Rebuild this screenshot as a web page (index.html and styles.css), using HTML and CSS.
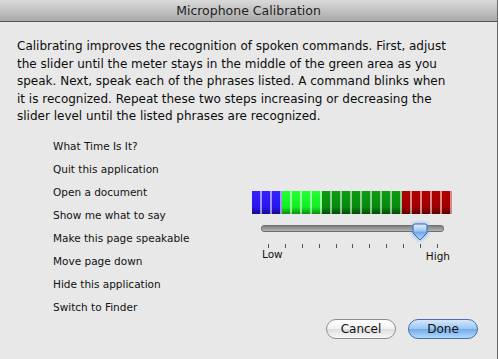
FILE: index.html
```html
<!DOCTYPE html>
<html lang="en">
<head>
    <meta charset="UTF-8">
    <title>Microphone Calibration</title>
    <link rel="stylesheet" href="styles.css">
</head>
<body>
    <div class="window">
        <div class="titlebar">Microphone Calibration</div>

        <div class="content">
            <p class="intro">
                Calibrating improves the recognition of spoken commands. First, adjust<br>
                the slider until the meter stays in the middle of the green area as you<br>
                speak. Next, speak each of the phrases listed. A command blinks when<br>
                it is recognized. Repeat these two steps increasing or decreasing the<br>
                slider level until the listed phrases are recognized.
            </p>

            <div class="main">
                <ul class="phrases">
                    <li>What Time Is It?</li>
                    <li>Quit this application</li>
                    <li>Open a document</li>
                    <li>Show me what to say</li>
                    <li>Make this page speakable</li>
                    <li>Move page down</li>
                    <li>Hide this application</li>
                    <li>Switch to Finder</li>
                </ul>

                <div class="calibration">
                    <div class="meter">
                        <span class="seg blue"></span>
                        <span class="seg blue"></span>
                        <span class="seg blue"></span>
                        <span class="seg lime"></span>
                        <span class="seg lime"></span>
                        <span class="seg lime"></span>
                        <span class="seg lime"></span>
                        <span class="seg green"></span>
                        <span class="seg green"></span>
                        <span class="seg green"></span>
                        <span class="seg green"></span>
                        <span class="seg green"></span>
                        <span class="seg green"></span>
                        <span class="seg green"></span>
                        <span class="seg green"></span>
                        <span class="seg red"></span>
                        <span class="seg red"></span>
                        <span class="seg red"></span>
                        <span class="seg red"></span>
                        <span class="seg red"></span>
                    </div>

                    <div class="slider">
                        <div class="track"></div>
                        <svg class="knob" width="20" height="20" viewBox="0 0 20 20">
                            <defs>
                                <linearGradient id="knobFill" x1="0" y1="0" x2="0" y2="1">
                                    <stop offset="0" stop-color="#e2effd"/>
                                    <stop offset="0.45" stop-color="#9cc5f2"/>
                                    <stop offset="0.5" stop-color="#6ea6e8"/>
                                    <stop offset="1" stop-color="#b8dcfc"/>
                                </linearGradient>
                            </defs>
                            <path d="M3,4 Q3,2 5,2 H15 Q17,2 17,4 V11 L10,18 L3,11 Z" fill="url(#knobFill)" stroke="#3c6aa6" stroke-width="1"/>
                        </svg>
                    </div>

                    <div class="ticks">
                        <span></span><span></span><span></span><span></span><span></span><span></span>
                        <span></span><span></span><span></span><span></span><span></span>
                    </div>
                    <div class="scale">
                        <span>Low</span>
                        <span class="high">High</span>
                    </div>
                </div>
            </div>

            <div class="buttons">
                <button class="btn">Cancel</button>
                <button class="btn default">Done</button>
            </div>
        </div>
    </div>
</body>
</html>
```

FILE: styles.css
```css
body { margin: 0; background: #fff; font-family: "DejaVu Sans", "Liberation Sans", sans-serif; color: #111; }
.window { width: 497px; height: 359px; background: #e8e8e8; border-right: 1px solid #6a6a6a; box-sizing: content-box; overflow: hidden; }

.titlebar { height: 21px; line-height: 22px; text-align: center; font-size: 12.5px; color: #1e1e1e; background: linear-gradient(#dadada, #a9a9a9); border-bottom: 1px solid #555; }

.content { padding: 16px 19px 0 17px; }
.intro { margin: 0; font-size: 12px; line-height: 17.5px; white-space: nowrap; color: #0c0c0c; }

.main { display: flex; margin-top: 9px; }
.phrases { list-style: none; margin: 0; padding: 0 0 0 36px; width: 199px; font-size: 10.5px; line-height: 23px; }

.calibration { margin-top: 56px; width: 200px; }
.meter { display: flex; height: 23px; }
.seg { width: 10px; height: 23px; box-sizing: border-box; border-right: 2px solid rgba(255,255,255,0.55); }
.seg.blue { background: linear-gradient(#3524ff, #2a14f0 70%, #150a8c); }
.seg.lime { background: linear-gradient(#22ff33, #12ee22 70%, #0a8c12); }
.seg.green { background: linear-gradient(#0c9a14, #078a0e 70%, #034a06); }
.seg.red { background: linear-gradient(#b00000, #a00000 70%, #580000); }

.slider { position: relative; height: 18px; margin: 11px 8px 0 9px; }
.track { margin-top: 5px; height: 5px; border-radius: 3px; border: 1px solid #6e6e6e; background: linear-gradient(#7e7e7e, #b4b4b4); }
.knob { position: absolute; left: 149px; top: -3px; filter: drop-shadow(0 0 2px #6fa8ee); }

.ticks { display: flex; justify-content: space-between; width: 170px; margin: 1px 0 0 16px; }
.ticks span { width: 1px; height: 4px; background: #555; }

.scale { display: flex; justify-content: space-between; width: 188px; margin-left: 10px; font-size: 10.5px; line-height: 12px; }
.scale .high { margin-top: 2px; }

.buttons { display: flex; justify-content: flex-end; gap: 12px; }
.btn { width: 70px; height: 20px; padding: 0; font-family: inherit; font-size: 12px; color: #111; border-radius: 10px; border: 1px solid #8c8c8c; background: linear-gradient(#ffffff, #f2f2f2 50%, #dedede 52%, #f8f8f8); }
.btn.default { border-color: #4a6ea6; background: linear-gradient(#d6e8fc, #9cc6f4 48%, #74ace9 52%, #b2dafd); }
```
